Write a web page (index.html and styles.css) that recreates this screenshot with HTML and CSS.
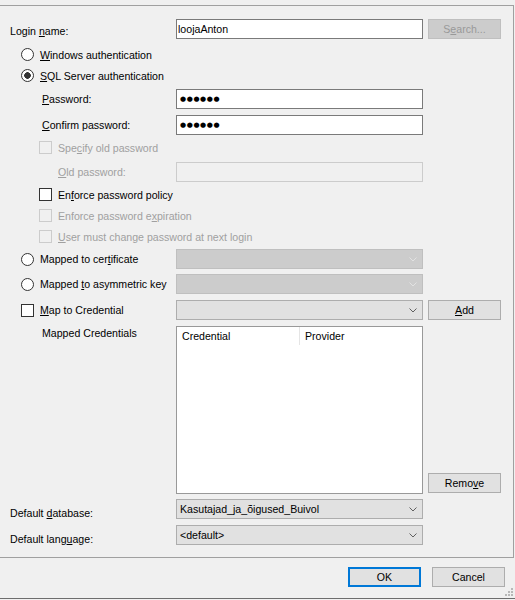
FILE: index.html
```html
<!DOCTYPE html>
<html lang="en">

<head>
    <meta charset="UTF-8" />
    <title>Login - New</title>
    <link rel="stylesheet" href="styles.css">
</head>

<body>
    <div class="panel">
        <div class="form">
            <div class="row">
                <span class="label low2">Login <u>n</u>ame:</span>
                <div class="field">loojaAnton</div>
                <div class="btn disabled">S<u>e</u>arch...</div>
            </div>

            <div class="opt mt5">
                <span class="radio"></span>
                <span><u>W</u>indows authentication</span>
            </div>
            <div class="opt">
                <span class="radio checked"></span>
                <span><u>S</u>QL Server authentication</span>
            </div>

            <div class="row mt3">
                <span class="label sub"><u>P</u>assword:</span>
                <div class="field dots">●●●●●●</div>
            </div>
            <div class="row">
                <span class="label sub"><u>C</u>onfirm password:</span>
                <div class="field dots">●●●●●●</div>
            </div>

            <div class="opt sub mt2 off">
                <span class="check"></span>
                <span>Spe<u>c</u>ify old password</span>
            </div>
            <div class="row mt4">
                <span class="label sub2 off"><u>O</u>ld password:</span>
                <div class="field disabled"></div>
            </div>

            <div class="opt sub mt2">
                <span class="check"></span>
                <span>En<u>f</u>orce password policy</span>
            </div>
            <div class="opt sub off">
                <span class="check"></span>
                <span>Enforce password e<u>x</u>piration</span>
            </div>
            <div class="opt sub off">
                <span class="check"></span>
                <span><u>U</u>ser must change password at next login</span>
            </div>

            <div class="row mt2">
                <div class="opt">
                    <span class="radio"></span>
                    <span>Mapped to cer<u>t</u>ificate</span>
                </div>
                <div class="combo disabled">
                    <span></span>
                    <svg width="8" height="5" viewBox="0 0 8 5"><path d="M0.5 0.5 L4 4 L7.5 0.5" /></svg>
                </div>
            </div>
            <div class="row mt5">
                <div class="opt">
                    <span class="radio"></span>
                    <span>Mapped <u>t</u>o asymmetric key</span>
                </div>
                <div class="combo disabled">
                    <span></span>
                    <svg width="8" height="5" viewBox="0 0 8 5"><path d="M0.5 0.5 L4 4 L7.5 0.5" /></svg>
                </div>
            </div>
            <div class="row">
                <div class="opt">
                    <span class="check"></span>
                    <span><u>M</u>ap to Credential</span>
                </div>
                <div class="combo">
                    <span></span>
                    <svg width="8" height="5" viewBox="0 0 8 5"><path d="M0.5 0.5 L4 4 L7.5 0.5" /></svg>
                </div>
                <div class="btn"><u>A</u>dd</div>
            </div>

            <div class="row list-row">
                <span class="label sub">Mapped Credentials</span>
                <div class="list">
                    <div class="list-head">
                        <div class="col first">Credential</div>
                        <div class="col">Provider</div>
                    </div>
                </div>
                <div class="btn remove">Remo<u>v</u>e</div>
            </div>

            <div class="row mt5">
                <span class="label low4">Default <u>d</u>atabase:</span>
                <div class="combo">
                    <span>Kasutajad_ja_õigused_Buivol</span>
                    <svg width="8" height="5" viewBox="0 0 8 5"><path d="M0.5 0.5 L4 4 L7.5 0.5" /></svg>
                </div>
            </div>
            <div class="row">
                <span class="label low4">Default lang<u>u</u>age:</span>
                <div class="combo">
                    <span>&lt;default&gt;</span>
                    <svg width="8" height="5" viewBox="0 0 8 5"><path d="M0.5 0.5 L4 4 L7.5 0.5" /></svg>
                </div>
            </div>
        </div>
    </div>

    <div class="footer">
        <div class="btn default">OK</div>
        <div class="btn">Cancel</div>
        <svg class="grip" width="8" height="8" viewBox="0 0 8 8">
            <rect x="6" y="0" width="2" height="2" />
            <rect x="3" y="3" width="2" height="2" />
            <rect x="6" y="3" width="2" height="2" />
            <rect x="0" y="6" width="2" height="2" />
            <rect x="3" y="6" width="2" height="2" />
            <rect x="6" y="6" width="2" height="2" />
        </svg>
    </div>
</body>

</html>
```

FILE: styles.css
```css
body {
    margin: 0;
    background-color: #f0f0f0;
    font-family: "Liberation Sans", Arial, sans-serif;
    font-size: 10.6px;
    color: #000;
}

.panel {
    margin-top: 5px;
    width: 513px;
    border: 1px solid #a0a0a0;
    border-left: none;
}

.form {
    padding: 13px 0 12px 10px;
}

.row {
    display: grid;
    grid-template-columns: 161px 247px 73px;
    column-gap: 5px;
    align-items: center;
    height: 20px;
    margin-top: 6px;
}

.row:first-child {
    margin-top: 0;
}

.mt2 { margin-top: 2px; }
.mt3 { margin-top: 3px; }
.mt4 { margin-top: 4px; }
.mt5 { margin-top: 5px; }

.label {
    white-space: nowrap;
}

/* labels that sit a little below the middle of their field */
.label.low2 {
    padding-top: 4px;
}

.label.low4 {
    padding-top: 8px;
}

.label.sub {
    padding-left: 32px;
}

.label.sub2 {
    padding-left: 48px;
}

.off {
    color: #a0a0a0;
}

.field {
    height: 20px;
    box-sizing: border-box;
    border: 1px solid #7a7a7a;
    background-color: #fff;
    padding: 0 1px;
    line-height: 18px;
    white-space: nowrap;
}

.field.dots {
    font-family: "DejaVu Sans", sans-serif;
    font-size: 7px;
    letter-spacing: 0.6px;
    padding-left: 3px;
}

.field.disabled {
    border-color: #cccccc;
    background-color: #f0f0f0;
}

.opt {
    display: flex;
    align-items: center;
    gap: 6px;
    height: 21px;
    padding-left: 11px;
    white-space: nowrap;
}

.row .opt {
    height: 20px;
}

.opt.sub {
    padding-left: 29px;
}

.radio {
    width: 13px;
    height: 13px;
    box-sizing: border-box;
    border: 1px solid #333;
    border-radius: 50%;
    background-color: #fff;
    flex-shrink: 0;
}

.radio.checked {
    background: radial-gradient(circle, #333 0 3px, #fff 3.6px);
}

.check {
    width: 13px;
    height: 13px;
    box-sizing: border-box;
    border: 1px solid #333;
    background-color: #fff;
    flex-shrink: 0;
}

.opt.off .check {
    border-color: #cccccc;
    background-color: transparent;
}

.combo {
    display: flex;
    align-items: center;
    justify-content: space-between;
    height: 20px;
    box-sizing: border-box;
    border: 1px solid #adadad;
    background-color: #e1e1e1;
    padding: 0 5px 0 3px;
    white-space: nowrap;
}

.combo path {
    fill: none;
    stroke: #606060;
    stroke-width: 1;
}

.combo.disabled {
    background-color: #cccccc;
    border-color: #bfbfbf;
}

.combo.disabled path {
    stroke: #e2e2e2;
}

.btn {
    display: flex;
    align-items: center;
    justify-content: center;
    height: 20px;
    box-sizing: border-box;
    border: 1px solid #adadad;
    background-color: #e1e1e1;
}

.btn.disabled {
    background-color: #cccccc;
    border-color: #bfbfbf;
    color: #999;
}

.list-row {
    height: 168px;
    align-items: stretch;
}

.list-row .label {
    align-self: start;
    line-height: 14px;
}

.list {
    border: 1px solid #999;
    background-color: #fff;
}

.list-head {
    display: flex;
    height: 18px;
}

.col {
    padding-left: 5px;
    line-height: 18px;
}

.col.first {
    width: 117px;
    border-right: 1px solid #e5e5e5;
}

.btn.remove {
    align-self: end;
    margin-bottom: 1px;
}

.footer {
    position: relative;
    display: flex;
    justify-content: flex-end;
    gap: 11px;
    height: 41px;
    box-sizing: border-box;
    padding: 9px 10px 0 0;
    border-bottom: 1px solid #6d6d6d;
}

.footer .btn {
    width: 73px;
}

.btn.default {
    border: 2px solid #0078d7;
}

.grip {
    position: absolute;
    right: 2px;
    bottom: 2px;
    fill: #b8b8b8;
}
```
